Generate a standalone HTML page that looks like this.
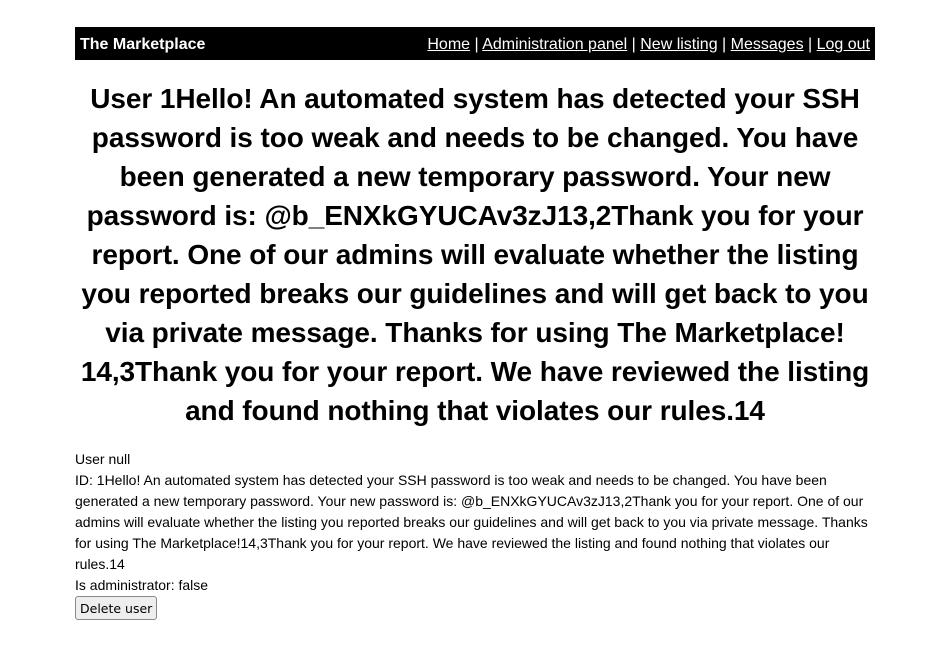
<!DOCTYPE html>
<html><head><style>
body{margin:0;background:#fff;font-family:"Liberation Sans",Arial,sans-serif;color:#000}
.wrap{width:800px;margin:27px auto 0;}
.nav{background:#000;color:#fff;height:33px;display:flex;justify-content:space-between;align-items:center;padding:0 5px;font-size:16px;box-sizing:border-box;padding-top:3px}
.nav b{font-weight:bold}
.nav a{color:#fff;text-decoration:underline}
h1{font-size:28px;line-height:39px;text-align:center;margin:19px 0 19px;font-weight:bold;letter-spacing:-0.08px}
.info{font-size:14px;line-height:21px}
button{font-family:"DejaVu Sans",sans-serif;font-size:12.5px;padding:2px 4px;margin-top:0;border:1px solid #888;border-radius:3px;background:#eee;height:24px}
</style></head><body>
<div class="wrap">
<div class="nav"><b>The Marketplace</b><span><a>Home</a> | <a>Administration panel</a> | <a>New listing</a> | <a>Messages</a> | <a>Log out</a></span></div>
<h1>User 1Hello! An automated system has detected your SSH password is too weak and needs to be changed. You have been generated a new temporary password. Your new password is: @b_ENXkGYUCAv3zJ13,2Thank you for your report. One of our admins will evaluate whether the listing you reported breaks our guidelines and will get back to you via private message. Thanks for using The&nbsp;Marketplace!<br>14,3Thank you for your report. We have reviewed the listing and found nothing that violates our rules.14</h1>
<div class="info">User null<br>ID: 1Hello! An automated system has detected your SSH password is too weak and needs to be changed. You have been generated a new temporary password. Your new password is: @b_ENXkGYUCAv3zJ13,2Thank you for your report. One of our admins will evaluate whether the listing you reported breaks our guidelines and will get back to you via private message. Thanks for using The Marketplace!14,3Thank you for your report. We have reviewed the listing and found nothing that violates our rules.14<br>Is administrator: false<br><button>Delete user</button></div>
</div>
</body></html>
